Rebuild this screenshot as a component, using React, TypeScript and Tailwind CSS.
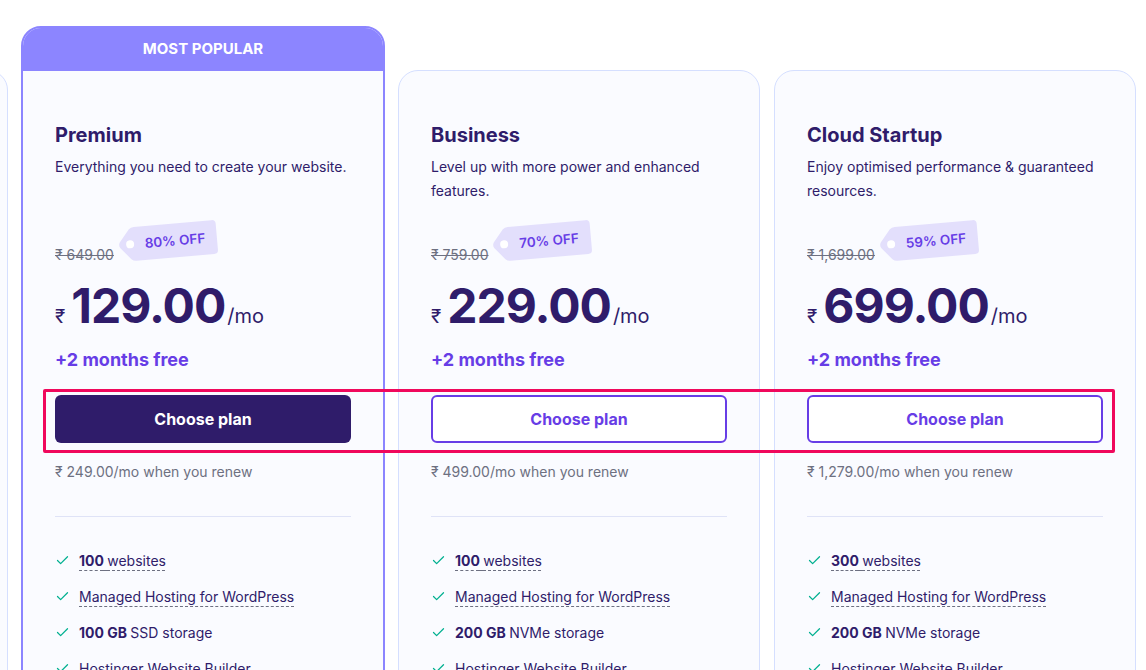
import { Check } from 'lucide-react'

type Feature = { bold?: string; text: string; dashed?: boolean }

type Plan = {
  name: string
  desc: string
  oldPrice: string
  off: string
  price: string
  renew: string
  popular?: boolean
  features: Feature[]
}

const plans: Plan[] = [
  {
    name: 'Premium',
    desc: 'Everything you need to create your website.',
    oldPrice: '₹ 649.00',
    off: '80% OFF',
    price: '129.00',
    renew: '₹ 249.00/mo when you renew',
    popular: true,
    features: [
      { bold: '100', text: 'websites', dashed: true },
      { text: 'Managed Hosting for WordPress', dashed: true },
      { bold: '100 GB', text: 'SSD storage' },
      { text: 'Hostinger Website Builder', dashed: true },
      { text: 'Free domain', dashed: true },
    ],
  },
  {
    name: 'Business',
    desc: 'Level up with more power and enhanced features.',
    oldPrice: '₹ 759.00',
    off: '70% OFF',
    price: '229.00',
    renew: '₹ 499.00/mo when you renew',
    features: [
      { bold: '100', text: 'websites', dashed: true },
      { text: 'Managed Hosting for WordPress', dashed: true },
      { bold: '200 GB', text: 'NVMe storage' },
      { text: 'Hostinger Website Builder', dashed: true },
      { text: 'Free domain', dashed: true },
    ],
  },
  {
    name: 'Cloud Startup',
    desc: 'Enjoy optimised performance & guaranteed resources.',
    oldPrice: '₹ 1,699.00',
    off: '59% OFF',
    price: '699.00',
    renew: '₹ 1,279.00/mo when you renew',
    features: [
      { bold: '300', text: 'websites', dashed: true },
      { text: 'Managed Hosting for WordPress', dashed: true },
      { bold: '200 GB', text: 'NVMe storage' },
      { text: 'Hostinger Website Builder', dashed: true },
      { text: 'Free domain', dashed: true },
    ],
  },
]

function Tag({ label }: { label: string }) {
  return (
    <div className="relative w-[100px] h-[36px] -rotate-[5deg] mb-[6px]">
      <svg className="absolute inset-0" width="100" height="36" viewBox="0 0 100 36">
        <path
          d="M17 1 H95 Q99 1 99 5 V31 Q99 35 95 35 H17 Q14 35 12 33 L2 21 Q0 18 2 15 L12 3 Q14 1 17 1 Z"
          fill="#e3dffc"
        />
        <circle cx="12" cy="18" r="4" fill="#ffffff" />
      </svg>
      <div className="relative h-full flex items-center justify-center pl-[14px] text-[13.5px] font-semibold text-[#673de6]">
        {label}
      </div>
    </div>
  )
}

function PlanBody({ plan }: { plan: Plan }) {
  return (
    <div className="px-[32px] pt-[50px] pb-10 flex flex-col">
      <h3 className="text-[20px] leading-[28px] font-bold text-[#2f1c6a]">{plan.name}</h3>
      <p className="mt-[6px] min-h-[48px] text-[14px] leading-[24px] text-[#2f1c6a]">{plan.desc}</p>

      <div className="mt-[22px] h-[40px] flex items-end gap-[4px]">
        <span className="text-[14px] leading-[20px] text-[#6d7081] line-through">{plan.oldPrice}</span>
        <Tag label={plan.off} />
      </div>

      <div className="mt-[17px] flex items-baseline text-[#2f1c6a]">
        <span className="text-[19px] mr-[6px]">₹</span>
        <span className="text-[48px] leading-[48px] font-bold tracking-[-1px]">{plan.price}</span>
        <span className="text-[20px] ml-[2px]">/mo</span>
      </div>

      <div className="mt-[14px] text-[18px] leading-[28px] font-bold text-[#673de6]">+2 months free</div>

      <button
        className={
          plan.popular
            ? 'mt-[21px] h-[48px] rounded-[6px] bg-[#2f1c6a] text-white text-[16px] font-bold'
            : 'mt-[21px] h-[48px] rounded-[6px] border-2 border-[#673de6] bg-white text-[#673de6] text-[16px] font-bold'
        }
      >
        Choose plan
      </button>

      <div className="mt-[19px] text-[14px] leading-[20px] text-[#6d7081]">{plan.renew}</div>

      <div className="mt-[34px] h-px bg-[#dfe3f7]" />

      <ul className="mt-[34px] flex flex-col gap-[16px]">
        {plan.features.map((f, i) => (
          <li key={i} className="flex items-center gap-[9px] text-[14px] leading-[20px] text-[#2f1c6a]">
            <Check size={15} strokeWidth={2} className="text-[#00b090] shrink-0" />
            <span
              className={
                f.dashed
                  ? 'underline decoration-dashed decoration-1 underline-offset-[4px] decoration-[#6d7081]'
                  : ''
              }
            >
              {f.bold && <b className="font-bold">{f.bold} </b>}
              {f.text}
            </span>
          </li>
        ))}
      </ul>
    </div>
  )
}

export default function App() {
  return (
    <div
      className="relative w-[1146px] h-[670px] overflow-hidden bg-white"
      style={{ fontFamily: 'Inter, "Noto Sans", sans-serif' }}
    >
      <div className="flex items-start pt-[26px] gap-[13px] -ml-[354px]">
        {/* partial card on the left */}
        <div className="mt-[44px] w-[362px] h-[700px] shrink-0 rounded-[20px] border border-[#d5dfff] bg-[#fafbff]" />

        {plans.map((plan) =>
          plan.popular ? (
            <div
              key={plan.name}
              className="w-[364px] h-[700px] shrink-0 rounded-[20px] border-2 border-[#8c85ff] bg-[#fafbff] overflow-hidden"
            >
              <div className="h-[43px] bg-[#8c85ff] flex items-center justify-center text-white text-[15px] font-bold">
                MOST POPULAR
              </div>
              <PlanBody plan={plan} />
            </div>
          ) : (
            <div
              key={plan.name}
              className="mt-[44px] w-[362px] h-[700px] shrink-0 rounded-[20px] border border-[#d5dfff] bg-[#fafbff] last:ml-px"
            >
              <PlanBody plan={plan} />
            </div>
          )
        )}
      </div>

      {/* highlight annotation */}
      <div className="absolute left-[43px] top-[389px] w-[1072px] h-[64px] border-[3px] border-[#f0085c] rounded-[2px] pointer-events-none" />
    </div>
  )
}
